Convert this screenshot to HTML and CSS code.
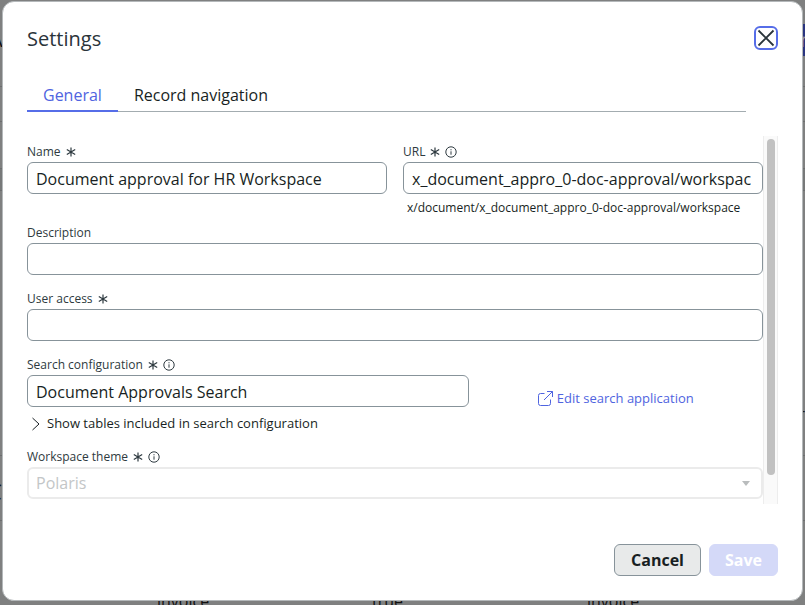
FILE: index.html
```html
<!DOCTYPE html>
<html lang="en">
<head>
    <meta charset="UTF-8">
    <meta name="viewport" content="width=device-width, initial-scale=1.0">
    <title>Settings</title>
    <link rel="stylesheet" href="styles.css">
</head>
<body>

    <!-- Page behind the dialog -->
    <div class="page" aria-hidden="true">
        <div class="page-bar"><span>A</span><span class="page-action">n</span></div>
        <div class="page-row"></div>
        <div class="page-row page-row-tall"></div>
        <div class="page-row page-row-short"></div>
        <div class="page-space"><span>r</span></div>
        <div class="page-row page-heading"><span>C</span></div>
        <div class="page-cells"><span>invoice</span><span>true</span><span>invoice</span></div>
    </div>

    <div class="modal" role="dialog" aria-labelledby="modal-title">
        <header class="modal-header">
            <h1 id="modal-title">Settings</h1>
            <button type="button" class="close" aria-label="Close">
                <svg width="18" height="18" viewBox="0 0 18 18"><path d="M1.5 1.5l15 15M16.5 1.5l-15 15"/></svg>
            </button>
        </header>

        <div class="tabs" role="tablist">
            <button type="button" class="tab active" role="tab" aria-selected="true">General</button>
            <button type="button" class="tab" role="tab" aria-selected="false">Record navigation</button>
        </div>

        <div class="modal-body">
            <form class="form" id="settings-form">
                <div class="row">
                    <div class="field">
                        <label for="name">Name
                            <svg class="required" viewBox="0 0 10 10"><path d="M5 .5v9M.8 2.5l8.4 5M9.2 2.5l-8.4 5"/></svg>
                        </label>
                        <input type="text" id="name" value="Document approval for HR Workspace">
                    </div>
                    <div class="field">
                        <label for="url">URL
                            <svg class="required" viewBox="0 0 10 10"><path d="M5 .5v9M.8 2.5l8.4 5M9.2 2.5l-8.4 5"/></svg>
                            <svg class="info" viewBox="0 0 12 12"><circle cx="6" cy="6" r="5.2"/><path d="M6 5.3v3.4M6 3.2v1.1"/></svg>
                        </label>
                        <input type="text" id="url" value="x_document_appro_0-doc-approval/workspace">
                        <p class="hint">x/document/x_document_appro_0-doc-approval/workspace</p>
                    </div>
                </div>

                <div class="field">
                    <label for="description">Description</label>
                    <input type="text" id="description">
                </div>

                <div class="field">
                    <label for="access">User access
                        <svg class="required" viewBox="0 0 10 10"><path d="M5 .5v9M.8 2.5l8.4 5M9.2 2.5l-8.4 5"/></svg>
                    </label>
                    <input type="text" id="access">
                </div>

                <div class="search-row">
                    <div class="field">
                        <label for="search">Search configuration
                            <svg class="required" viewBox="0 0 10 10"><path d="M5 .5v9M.8 2.5l8.4 5M9.2 2.5l-8.4 5"/></svg>
                            <svg class="info" viewBox="0 0 12 12"><circle cx="6" cy="6" r="5.2"/><path d="M6 5.3v3.4M6 3.2v1.1"/></svg>
                        </label>
                        <input type="text" id="search" value="Document Approvals Search">
                        <button type="button" class="expander" aria-expanded="false">
                            <svg width="8" height="14" viewBox="0 0 8 14"><path d="M.5 1L7 7l-6.500 6"/></svg>
                            Show tables included in search configuration
                        </button>
                    </div>
                    <a href="#" class="edit-link">
                        <svg width="15" height="15" viewBox="0 0 15 15"><path d="M6.5 2.5h-4a2 2 0 0 0-2 2v8a2 2 0 0 0 2 2h8a2 2 0 0 0 2-2v-4M9 .5h5.5V6M14.5 .5L6 9"/></svg>
                        Edit search application
                    </a>
                </div>

                <div class="field">
                    <label for="theme">Workspace theme
                        <svg class="required" viewBox="0 0 10 10"><path d="M5 .5v9M.8 2.5l8.4 5M9.2 2.5l-8.4 5"/></svg>
                        <svg class="info" viewBox="0 0 12 12"><circle cx="6" cy="6" r="5.2"/><path d="M6 5.3v3.4M6 3.2v1.1"/></svg>
                    </label>
                    <div class="select-wrap">
                        <select id="theme" disabled>
                            <option>Polaris</option>
                        </select>
                        <svg class="arrow" width="8" height="5" viewBox="0 0 8 5"><path d="M0 0h8L4 5z"/></svg>
                    </div>
                </div>
            </form>
            <div class="scrollbar"><div class="thumb"></div></div>
        </div>

        <footer class="modal-footer">
            <button type="button" class="btn btn-cancel">Cancel</button>
            <button type="submit" form="settings-form" class="btn btn-save" disabled>Save</button>
        </footer>
    </div>

</body>
</html>
```

FILE: styles.css
```css
* {
    box-sizing: border-box;
}
body {
    margin: 0;
    height: 100vh;
    overflow: hidden;
    background: #7f8080;
    font-family: "Open Sans", "Noto Sans", sans-serif;
    font-size: 16px;
    color: #181f23;
}
button, input, select {
    font: inherit;
    color: inherit;
}
svg {
    fill: none;
    stroke: currentColor;
}

/* Page behind the dialog */
.page {
    height: 100vh;
    display: flex;
    flex-direction: column;
    overflow: hidden;
    color: #111;
}
.page-bar {
    height: 87px;
    padding-top: 24px;
    display: flex;
    justify-content: space-between;
    align-items: flex-start;
    border-bottom: 1px solid #6c6e6f;
    font-size: 20px;
    line-height: 32px;
}
.page-bar span:first-child {
    margin-left: -10px;
}
.page-action {
    width: 5px;
    background: #2a3580;
    color: #999;
}
.page-row {
    height: 35px;
    flex: none;
    border-bottom: 1px solid #6c6e6f;
}
.page-row-tall {
    height: 47px;
}
.page-row-short {
    height: 22px;
    background: #777979;
}
.page-space {
    flex: 1;
    display: flex;
    justify-content: flex-end;
    align-items: flex-end;
    padding-bottom: 32px;
    font-size: 14px;
}
.page-heading {
    height: 66px;
    margin-bottom: 84px;
    padding-top: 20px;
    border-top: 1px solid #6c6e6f;
    font-size: 22px;
}
.page-heading span {
    margin-left: -12px;
}
.page-cells {
    height: 13px;
    margin-top: -13px;
    flex: none;
    display: grid;
    grid-template-columns: repeat(3, 215px);
    padding-left: 157px;
    font-size: 16px;
    line-height: 18px;
}

.modal {
    position: fixed;
    inset: 1px 2px 4px;
    padding: 24px;
    display: flex;
    flex-direction: column;
    background: #fff;
    border: 1px solid #b4b8ba;
    border-radius: 12px;
}
.modal-header {
    display: flex;
    justify-content: space-between;
    align-items: center;
    height: 24px;
}
h1 {
    margin: 0;
    padding-top: 2px;
    font-size: 20px;
    font-weight: normal;
    line-height: 24px;
    color: #2a343a;
}
.close {
    display: flex;
    align-items: center;
    justify-content: center;
    width: 24px;
    height: 24px;
    padding: 0;
    color: #2a343a;
    background: #fff;
    border: 2px solid #566de8;
    border-radius: 6px;
}
.close svg {
    flex: none;
    stroke-width: 1.8;
}
.tabs {
    display: flex;
    margin: 28px 32px 0 0;
    border-bottom: 1px solid #a3acb0;
}
.tab {
    height: 34px;
    margin-bottom: -1px;
    padding: 2px 16px 0;
    background: none;
    border: 0;
    border-bottom: 2px solid transparent;
}
.tab.active {
    color: #4f64e0;
    border-bottom-color: #566de8;
}

.modal-body {
    flex: 1;
    display: flex;
    margin-top: 24px;
    min-height: 0;
}
.form {
    flex: 1;
    display: flex;
    flex-direction: column;
    gap: 15px;
    padding-top: 7px;
    min-width: 0;
}
.field {
    min-width: 0;
}
.row {
    display: grid;
    grid-template-columns: 1fr 1fr;
    gap: 16px;
    margin-bottom: -8px;
}
label {
    display: flex;
    align-items: center;
    gap: 5px;
    margin-bottom: 1px;
    font-size: 12px;
    line-height: 18px;
    color: #2e3a40;
}
.required {
    width: 10px;
    height: 10px;
    stroke-width: 1.2;
}
.info {
    width: 12px;
    height: 12px;
}
input, select {
    display: block;
    width: 100%;
    height: 32px;
    padding: 2px 11px 0 8px;
    background: #fff;
    border: 1px solid #87939a;
    border-radius: 6px;
}
.hint {
    margin: 5px 4px 0;
    font-size: 12px;
    line-height: 18px;
}
.search-row {
    display: grid;
    grid-template-columns: 3fr 2fr;
    align-items: center;
}
.expander {
    display: flex;
    align-items: center;
    gap: 7px;
    margin-top: 7px;
    padding: 0 5px;
    background: none;
    border: 0;
    font-size: 13px;
    line-height: 19px;
}
.edit-link {
    display: flex;
    align-items: center;
    justify-content: center;
    gap: 4px;
    padding-top: 7px;
    font-size: 13px;
    line-height: 20px;
    color: #4f64e0;
    text-decoration: none;
}
.select-wrap {
    position: relative;
}
select {
    appearance: none;
}
select:disabled {
    opacity: 1;
    color: #c3c6c7;
    border: 2px solid #ebebeb;
    padding: 0 7px;
}
.arrow {
    position: absolute;
    top: 14px;
    right: 13px;
    fill: #b9bcbd;
    stroke: none;
}
.scrollbar {
    width: 15px;
    padding-top: 3px;
    background: #fafafa;
    border: solid #ededed;
    border-width: 0 1px;
}
.thumb {
    width: 8px;
    height: 92%;
    margin: 0 auto;
    background: #c1c1c1;
    border-radius: 4px;
}

.modal-footer {
    display: flex;
    justify-content: flex-end;
    gap: 8px;
    margin-top: 40px;
}
.btn {
    height: 32px;
    padding: 0 16px;
    border: 1px solid #87939a;
    border-radius: 6px;
    font-weight: bold;
}
.btn-cancel {
    background: #e8eaea;
}
.btn-save {
    padding: 0 15px;
    color: #fff;
    background: #d4d9f8;
    border-color: #d4d9f8;
}
```
